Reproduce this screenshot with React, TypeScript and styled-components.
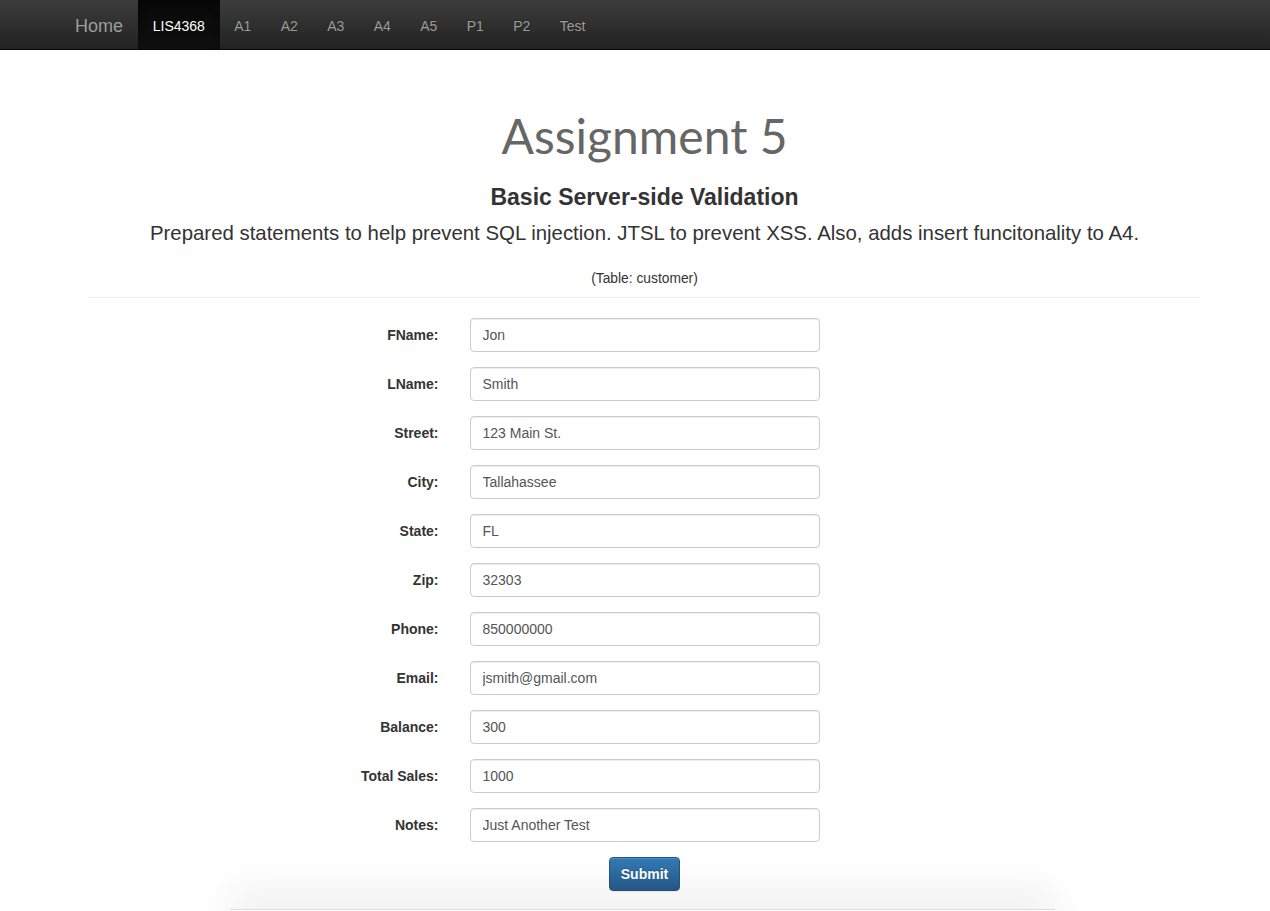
import React from "react";
import styled, { createGlobalStyle } from "styled-components";

const GlobalStyle = createGlobalStyle`
  html, body { margin: 0; padding: 0; background: #fff; }
  body {
    font-family: "Liberation Sans", Arial, sans-serif;
    font-size: 14px;
    line-height: 1.42857;
    color: #333;
  }
  * { box-sizing: border-box; }
`;

const Navbar = styled.nav`
  height: 50px;
  background: linear-gradient(to bottom, #3c3c3c 0%, #222 100%);
  border-bottom: 1px solid #080808;
  display: flex;
  align-items: stretch;
  padding-left: 60px;
`;

const Brand = styled.a`
  display: flex;
  align-items: center;
  padding: 4px 15px 0;
  font-size: 18px;
  color: #9d9d9d;
  text-decoration: none;
`;

const NavItem = styled.a<{ $active?: boolean }>`
  display: flex;
  align-items: center;
  padding: 4px 14.7px 0;
  font-size: 14px;
  color: ${(p) => (p.$active ? "#fff" : "#9d9d9d")};
  text-decoration: none;
  background: ${(p) =>
    p.$active ? "linear-gradient(to bottom, #080808 0%, #0f0f0f 100%)" : "transparent"};
  box-shadow: ${(p) => (p.$active ? "inset 0 3px 9px rgba(0,0,0,.25)" : "none")};
  text-shadow: 0 -1px 0 rgba(0, 0, 0, 0.25);
`;

const Main = styled.main`
  display: flex;
  flex-direction: column;
  align-items: center;
  padding-left: 89px;
  padding-right: 70px;
`;

const Title = styled.h1`
  margin: 56px 0 0;
  font-family: Lato, "Open Sans", sans-serif;
  font-weight: 400;
  font-size: 48px;
  line-height: 60px;
  color: #666;
`;

const Subtitle = styled.h3`
  margin: 18px 0 0;
  font-size: 23px;
  font-weight: 700;
  line-height: 26px;
  color: #333;
`;

const Lead = styled.p`
  margin: 8px 0 0;
  font-size: 20.4px;
  line-height: 30px;
  color: #333;
`;

const TableNote = styled.p`
  margin: 21px 0 0;
  font-size: 13.8px;
  line-height: 20px;
`;

const Rule = styled.hr`
  align-self: stretch;
  margin: 8px 0 0;
  border: 0;
  border-top: 1px solid #eee;
`;

const Form = styled.form`
  align-self: stretch;
  display: flex;
  flex-direction: column;
  align-items: center;
  margin-top: 20px;
`;

const Row = styled.div`
  align-self: stretch;
  display: grid;
  grid-template-columns: 1fr 350px 1fr;
  column-gap: 31px;
  align-items: center;
  margin-bottom: 15px;
`;

const Label = styled.label`
  text-align: right;
  font-weight: 700;
  font-size: 14px;
  color: #333;
  padding-top: 2px;
`;

const Input = styled.input`
  height: 34px;
  width: 350px;
  padding: 6px 12px;
  font-family: "Liberation Sans", Arial, sans-serif;
  font-size: 14px;
  color: #555;
  background: #fff;
  border: 1px solid #ccc;
  border-radius: 4px;
  box-shadow: inset 0 1px 1px rgba(0, 0, 0, 0.075);
`;

const Submit = styled.button`
  width: 71px;
  height: 34px;
  font-family: "Liberation Sans", Arial, sans-serif;
  font-size: 14px;
  font-weight: 700;
  color: #fff;
  background: linear-gradient(to bottom, #337ab7 0%, #265a88 100%);
  border: 1px solid #245580;
  border-radius: 4px;
  text-shadow: 0 -1px 0 rgba(0, 0, 0, 0.2);
  box-shadow: inset 0 1px 0 rgba(255, 255, 255, 0.15), 0 1px 1px rgba(0, 0, 0, 0.075);
`;

const Footer = styled.footer`
  width: 825px;
  margin: 18px 0 0 -4px;
  border-top: 1px solid #ddd;
  background: #fff;
  box-shadow: 0 -18px 40px rgba(0, 0, 0, 0.07);
  text-align: center;
  padding: 0 0 20px;
  font-size: 12px;
  line-height: 16px;
  color: #888;
`;

const fields: [string, string][] = [
  ["FName:", "Jon"],
  ["LName:", "Smith"],
  ["Street:", "123 Main St."],
  ["City:", "Tallahassee"],
  ["State:", "FL"],
  ["Zip:", "32303"],
  ["Phone:", "850000000"],
  ["Email:", "jsmith@gmail.com"],
  ["Balance:", "300"],
  ["Total Sales:", "1000"],
  ["Notes:", "Just Another Test"],
];

const navLinks = ["A1", "A2", "A3", "A4", "A5", "P1", "P2", "Test"];

export default function App() {
  return (
    <>
      <GlobalStyle />
      <Navbar>
        <Brand href="#">Home</Brand>
        <NavItem href="#" $active>
          LIS4368
        </NavItem>
        {navLinks.map((l) => (
          <NavItem key={l} href="#">
            {l}
          </NavItem>
        ))}
      </Navbar>
      <Main>
        <Title>Assignment 5</Title>
        <Subtitle>Basic Server-side Validation</Subtitle>
        <Lead>
          Prepared statements to help prevent SQL injection. JTSL to prevent XSS. Also, adds insert
          funcitonality to A4.
        </Lead>
        <TableNote>(Table: customer)</TableNote>
        <Rule />
        <Form onSubmit={(e) => e.preventDefault()}>
          {fields.map(([label, value]) => (
            <Row key={label}>
              <Label>{label}</Label>
              <Input defaultValue={value} />
            </Row>
          ))}
          <Submit type="submit">Submit</Submit>
        </Form>
        <Footer>© Copyright 2016 Mark K. Jowett, Ph.D.</Footer>
      </Main>
    </>
  );
}
